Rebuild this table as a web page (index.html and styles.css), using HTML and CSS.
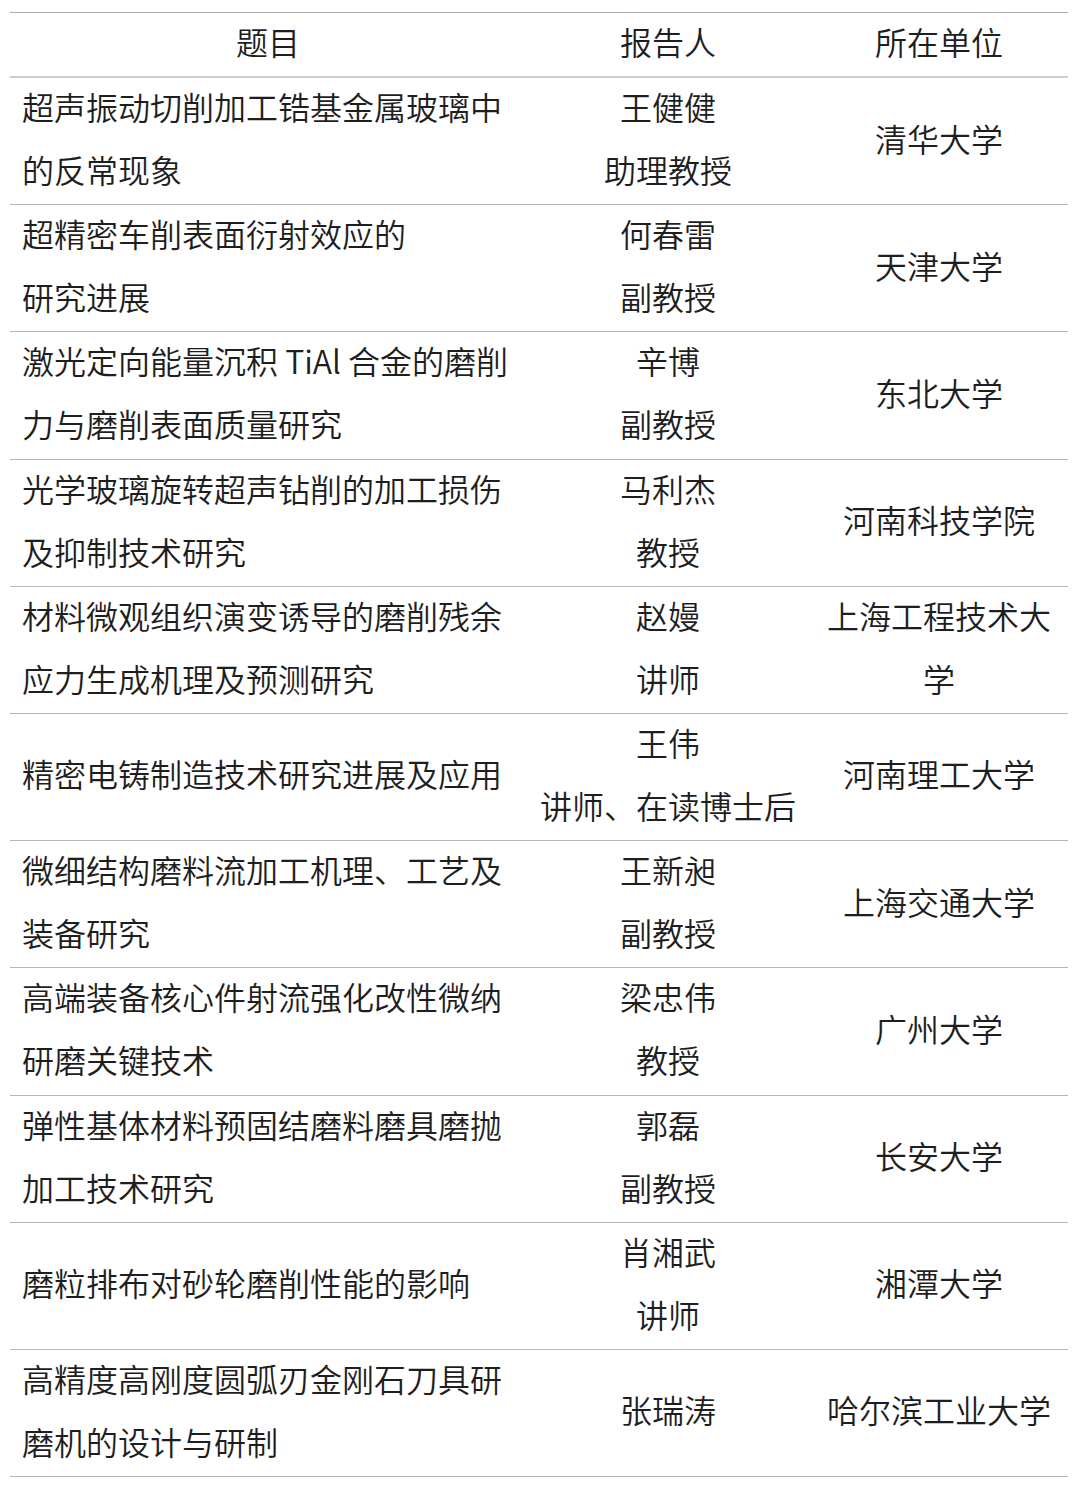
FILE: index.html
```html
<!DOCTYPE html>
<html lang="zh-CN">
<head>
<meta charset="utf-8">
<title>报告列表</title>
<link rel="stylesheet" href="styles.css">
</head>
<body>
<div class="wrap">
<table class="talks">
<colgroup>
<col class="c-title"><col class="c-person"><col class="c-unit">
</colgroup>
<thead>
<tr><th><div class="t">题目</div></th><th><div class="t">报告人</div></th><th><div class="t">所在单位</div></th></tr>
</thead>
<tbody>
<tr><td class="title"><div class="t">超声振动切削加工锆基金属玻璃中的反常现象</div></td><td class="person"><div class="t">王健健<br>助理教授</div></td><td><div class="t">清华大学</div></td></tr>
<tr><td class="title"><div class="t">超精密车削表面衍射效应的<br>研究进展</div></td><td class="person"><div class="t">何春雷<br>副教授</div></td><td><div class="t">天津大学</div></td></tr>
<tr><td class="title"><div class="t">激光定向能量沉积 TiAl 合金的磨削力与磨削表面质量研究</div></td><td class="person"><div class="t">辛博<br>副教授</div></td><td><div class="t">东北大学</div></td></tr>
<tr><td class="title"><div class="t">光学玻璃旋转超声钻削的加工损伤及抑制技术研究</div></td><td class="person"><div class="t">马利杰<br>教授</div></td><td><div class="t">河南科技学院</div></td></tr>
<tr><td class="title"><div class="t">材料微观组织演变诱导的磨削残余应力生成机理及预测研究</div></td><td class="person"><div class="t">赵嫚<br>讲师</div></td><td><div class="t">上海工程技术大学</div></td></tr>
<tr><td class="title"><div class="t">精密电铸制造技术研究进展及应用</div></td><td class="person"><div class="t">王伟<br>讲师、在读博士后</div></td><td><div class="t">河南理工大学</div></td></tr>
<tr><td class="title"><div class="t">微细结构磨料流加工机理、工艺及装备研究</div></td><td class="person"><div class="t">王新昶<br>副教授</div></td><td><div class="t">上海交通大学</div></td></tr>
<tr><td class="title"><div class="t">高端装备核心件射流强化改性微纳研磨关键技术</div></td><td class="person"><div class="t">梁忠伟<br>教授</div></td><td><div class="t">广州大学</div></td></tr>
<tr><td class="title"><div class="t">弹性基体材料预固结磨料磨具磨抛加工技术研究</div></td><td class="person"><div class="t">郭磊<br>副教授</div></td><td><div class="t">长安大学</div></td></tr>
<tr><td class="title"><div class="t">磨粒排布对砂轮磨削性能的影响</div></td><td class="person"><div class="t">肖湘武<br>讲师</div></td><td><div class="t">湘潭大学</div></td></tr>
<tr><td class="title"><div class="t">高精度高刚度圆弧刃金刚石刀具研磨机的设计与研制</div></td><td class="person"><div class="t">张瑞涛</div></td><td><div class="t">哈尔滨工业大学</div></td></tr>
</tbody>
</table>
</div>
</body>
</html>
```
FILE: styles.css
```css
html, body {
  margin: 0;
  padding: 0;
  background: #ffffff;
}
body {
  font-family: "Noto Sans CJK SC", "Noto Sans", sans-serif;
  font-weight: 350;
  color: #1e1e1e;
  font-size: 32px;
}
.wrap {
  padding: 12px 12px 0 10px;
}
.talks {
  width: 1058px;
  border-collapse: collapse;
  table-layout: fixed;
  border-top: 1px solid #a9aeb1;
}
.c-title { width: 516px; }
.c-person { width: 284px; }
.c-unit { width: 258px; }
.talks th {
  font-weight: 350;
  line-height: 63px;
  padding: 0;
  text-align: center;
  border-bottom: 2px solid #c7d0d3;
}
.talks td {
  line-height: 63.1px;
  padding: 0 8px;
  text-align: center;
  vertical-align: middle;
  border-bottom: 1px solid #b3b8bb;
}
.t {
  margin-top: -3px;
  margin-bottom: 3px;
}
.talks td.title {
  text-align: left;
  padding: 0 12px;
}
.talks td.person {
  padding: 0;
  white-space: nowrap;
}
```
